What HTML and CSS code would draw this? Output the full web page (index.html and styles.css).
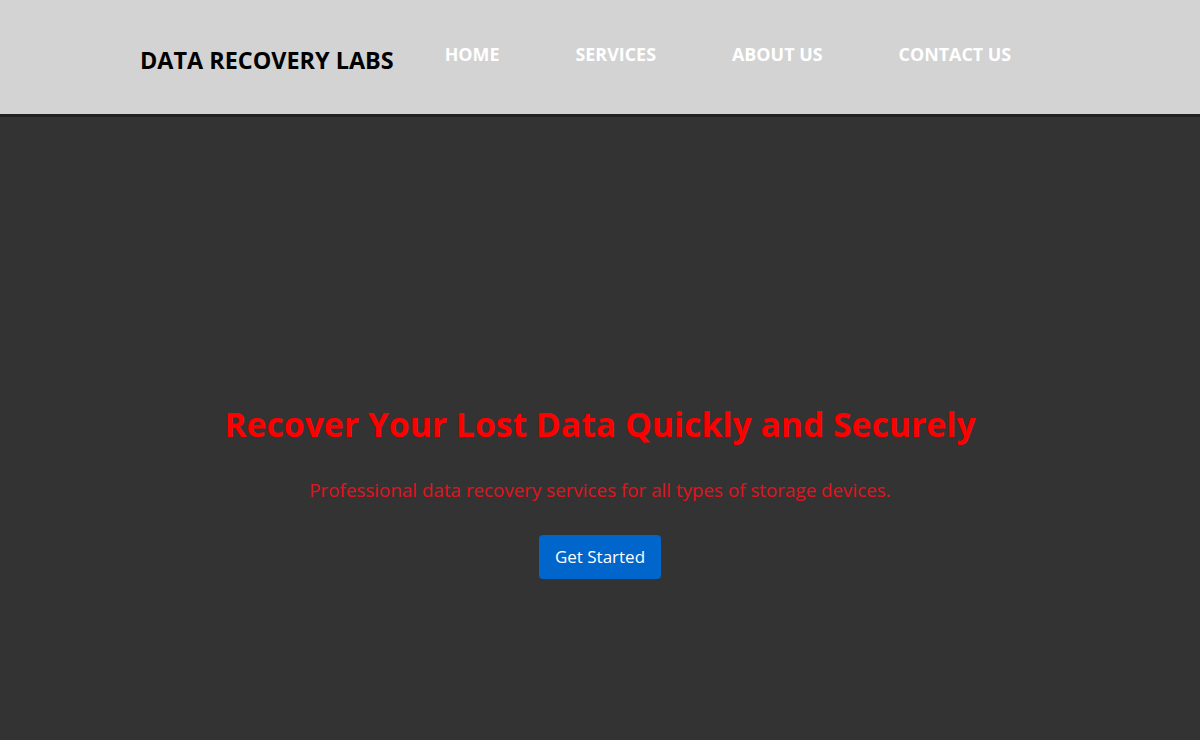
FILE: index.html
```html
<!DOCTYPE html>
<html lang="en">
<head>
<meta charset="utf-8">
<title>Data Recovery Labs</title>
<link rel="stylesheet" href="styles.css">
</head>
<body>
<header class="site-header">
  <div class="logo">DATA RECOVERY LABS</div>
  <nav class="nav">
    <a href="#" class="nav-link">HOME</a>
    <a href="#" class="nav-link">SERVICES</a>
    <a href="#" class="nav-link">ABOUT US</a>
    <a href="#" class="nav-link">CONTACT US</a>
  </nav>
</header>
<section class="hero">
  <h1 class="hero-title">Recover Your Lost Data Quickly and Securely</h1>
  <p class="hero-text">Professional data recovery services for all types of storage devices.</p>
  <a href="#" class="btn">Get Started</a>
</section>
</body>
</html>
```
FILE: styles.css
```css
* { box-sizing: border-box; }
html, body { margin: 0; padding: 0; }
body {
  background: #333333;
  font-family: "Open Sans", "Noto Sans", sans-serif;
  overflow: hidden;
}
.site-header {
  background: #d3d3d3;
  height: 117px;
  border-bottom: 3px solid #222222;
  display: flex;
  align-items: flex-start;
  padding-left: 140px;
}
.logo {
  font-size: 23.4px;
  font-weight: 700;
  color: #000;
  margin-top: 44px;
  line-height: 32px;
}
.nav {
  display: flex;
  gap: 76px;
  margin-left: 51px;
  margin-top: 39px;
}
.nav-link {
  color: #ffffff;
  font-weight: 700;
  font-size: 17.9px;
  text-decoration: none;
  line-height: 30px;
}
.hero {
  height: 740px;
  padding-top: 7px;
  display: flex;
  flex-direction: column;
  align-items: center;
  justify-content: center;
  text-align: center;
}
.hero-title {
  color: #ff0000;
  font-size: 33.7px;
  font-weight: 700;
  margin: 0 0 31px;
  line-height: 44px;
}
.hero-text {
  color: #e0141e;
  font-size: 18.8px;
  margin: 0 0 32px;
  line-height: 26px;
}
.btn {
  display: inline-block;
  background: #0066cc;
  color: #ffffff;
  font-size: 17px;
  padding: 0 16px;
  height: 44px;
  line-height: 44px;
  border-radius: 4px;
  text-decoration: none;
}
```
